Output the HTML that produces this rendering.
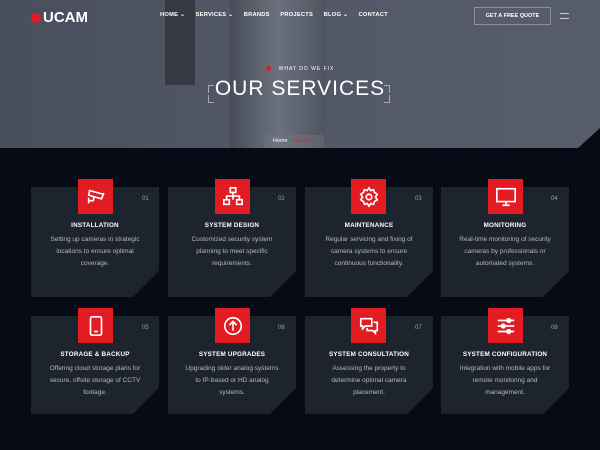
<!DOCTYPE html>
<html><head><style>
*{margin:0;padding:0;box-sizing:border-box}
body{width:600px;height:450px;overflow:hidden;background:#060b16;font-family:"Liberation Sans",sans-serif;color:#fff;position:relative}
.hero{position:absolute;left:0;top:0;width:600px;height:148px;background:linear-gradient(90deg,#484e5b 0%,#515766 40%,#575d6b 100%);clip-path:polygon(0 0,600px 0,600px 128px,578px 148px,0 148px)}
.pole{position:absolute;left:230px;top:0;width:95px;height:148px;background:linear-gradient(90deg,#3a3f48,#8a9099,#4a4f58);opacity:.45}
.blk{position:absolute;left:165px;top:0;width:30px;height:85px;background:#2a2e35;opacity:.7}
.logo{position:absolute;left:31px;top:9px;font-size:15px;font-weight:bold;display:flex;align-items:center}
.logo i{display:inline-block;width:10px;height:10px;border-radius:50%;background:#e31b23;margin-right:2px}
.nav{position:absolute;left:160px;top:12px;font-size:5.8px;font-weight:bold;letter-spacing:.2px}
.nav span{margin-right:10.5px}
.btn{position:absolute;left:474px;top:7px;width:77px;height:18px;border:1px solid #8a8f99;background:rgba(90,95,105,.6);font-size:5.5px;font-weight:bold;text-align:center;line-height:16px}
.ham{position:absolute;left:560px;top:13px;width:9px;height:6px;border-top:1.5px solid #ccc;border-bottom:1.5px solid #ccc}
.sub{position:absolute;left:0;width:600px;top:66px;text-align:center;font-size:5px;letter-spacing:1px}
.sub i{display:inline-block;width:5px;height:5px;border-radius:50%;background:#e31b23;margin-right:8px;vertical-align:middle}
.title{position:absolute;left:210px;top:76px;width:180px;height:26px;text-align:center;font-size:21px;font-weight:normal;letter-spacing:1px;line-height:26px}
.br{position:absolute;width:6px;height:8px;border:1px solid #aaa}
.crumb{position:absolute;left:264px;top:135px;width:60px;height:13px;background:rgba(120,125,135,.35);font-size:5.5px;line-height:13px;text-align:center}
.card{position:absolute;width:128px;background:#1e242e;clip-path:polygon(0 0,100% 0,100% calc(100% - 26px),calc(100% - 26px) 100%,0 100%);text-align:center}
.ic{position:absolute;width:35px;height:35px;background:#e31b23;display:flex;align-items:center;justify-content:center}
.num{position:absolute;font-size:6px;color:#9aa0aa}
.card h4{font-size:6.3px;font-weight:bold;letter-spacing:.2px;margin-top:35px}
.card p{font-size:6.5px;color:#b3b8c0;line-height:12px;margin:5px 15px 0}
</style></head><body>
<div class="hero"><div class="blk"></div><div class="pole"></div></div>
<div class="logo"><i></i>UCAM</div>
<div class="nav"><span>HOME ⌄</span><span>SERVICES ⌄</span><span>BRANDS</span><span>PROJECTS</span><span>BLOG ⌄</span><span>CONTACT</span></div>
<div class="btn">GET A FREE QUOTE</div>
<div class="ham"></div>
<div class="sub"><i></i>WHAT DO WE FIX</div>
<div class="title">OUR SERVICES</div>
<div class="br" style="left:208px;top:85px;border-right:0;border-bottom:0"></div>
<div class="br" style="left:208px;top:95px;border-right:0;border-top:0"></div>
<div class="br" style="left:384px;top:85px;border-left:0;border-bottom:0"></div>
<div class="br" style="left:384px;top:95px;border-left:0;border-top:0"></div>
<div class="crumb">Home &nbsp;<span style="color:#e31b23">› Services</span></div>

<div class="card" style="left:31px;top:187px;height:110px"><h4>INSTALLATION</h4><p>Setting up cameras in strategic locations to ensure optimal coverage.</p></div>
<div class="card" style="left:168px;top:187px;height:110px"><h4>SYSTEM DESIGN</h4><p>Customized security system planning to meet specific requirements.</p></div>
<div class="card" style="left:305px;top:187px;height:110px"><h4>MAINTENANCE</h4><p>Regular servicing and fixing of camera systems to ensure continuous functionality.</p></div>
<div class="card" style="left:441px;top:187px;height:110px"><h4>MONITORING</h4><p>Real-time monitoring of security cameras by professionals or automated systems.</p></div>
<div class="card" style="left:31px;top:316px;height:98px"><h4>STORAGE &amp; BACKUP</h4><p>Offering cloud storage plans for secure, offsite storage of CCTV footage.</p></div>
<div class="card" style="left:168px;top:316px;height:98px"><h4>SYSTEM UPGRADES</h4><p>Upgrading older analog systems to IP-based or HD analog systems.</p></div>
<div class="card" style="left:305px;top:316px;height:98px"><h4>SYSTEM CONSULTATION</h4><p>Assessing the property to determine optimal camera placement.</p></div>
<div class="card" style="left:441px;top:316px;height:98px"><h4>SYSTEM CONFIGURATION</h4><p>Integration with mobile apps for remote monitoring and management.</p></div>

<div class="num" style="left:142px;top:196px">01</div>
<div class="num" style="left:278px;top:196px">02</div>
<div class="num" style="left:415px;top:196px">03</div>
<div class="num" style="left:551px;top:196px">04</div>
<div class="num" style="left:142px;top:325px">05</div>
<div class="num" style="left:278px;top:325px">06</div>
<div class="num" style="left:415px;top:325px">07</div>
<div class="num" style="left:551px;top:325px">08</div>

<div class="ic" style="left:78px;top:179px"><svg width="22" height="22" viewBox="0 0 24 24" fill="none" stroke="#fff" stroke-width="1.8"><path d="M5 5l15 4-2 5-14-4z"/><path d="M10 12l-1 4H4M4 13v6"/><path d="M19 8l2 1"/></svg></div>
<div class="ic" style="left:215px;top:179px"><svg width="22" height="22" viewBox="0 0 24 24" fill="none" stroke="#fff" stroke-width="1.8"><rect x="9" y="2" width="6" height="5"/><rect x="2" y="15" width="6" height="5"/><rect x="16" y="15" width="6" height="5"/><path d="M12 7v4M5 15v-4h14v4M12 11v4"/></svg></div>
<div class="ic" style="left:351px;top:179px"><svg width="22" height="22" viewBox="0 0 24 24" fill="none" stroke="#fff" stroke-width="1.8"><circle cx="12" cy="12" r="3"/><path d="M12 2l2 3 3-1 1 3 3 2-2 3 2 3-3 2-1 3-3-1-2 3-2-3-3 1-1-3-3-2 2-3-2-3 3-2 1-3 3 1z"/></svg></div>
<div class="ic" style="left:488px;top:179px"><svg width="22" height="22" viewBox="0 0 24 24" fill="none" stroke="#fff" stroke-width="1.8"><rect x="2" y="3" width="20" height="14"/><path d="M8 21h8M12 17v4"/></svg></div>
<div class="ic" style="left:78px;top:308px"><svg width="22" height="22" viewBox="0 0 24 24" fill="none" stroke="#fff" stroke-width="1.8"><rect x="6" y="2" width="12" height="20" rx="2"/><path d="M10 18h4"/></svg></div>
<div class="ic" style="left:215px;top:308px"><svg width="22" height="22" viewBox="0 0 24 24" fill="none" stroke="#fff" stroke-width="1.8"><circle cx="12" cy="12" r="9"/><path d="M12 17V7M8 11l4-4 4 4"/></svg></div>
<div class="ic" style="left:351px;top:308px"><svg width="22" height="22" viewBox="0 0 24 24" fill="none" stroke="#fff" stroke-width="1.8"><path d="M3 4h12v8H8l-3 3v-3H3z"/><path d="M17 8h4v9h-2v3l-3-3h-6v-3"/></svg></div>
<div class="ic" style="left:488px;top:308px"><svg width="22" height="22" viewBox="0 0 24 24" fill="none" stroke="#fff" stroke-width="1.8"><path d="M3 6h18M3 12h18M3 18h18"/><circle cx="15" cy="6" r="2" fill="#fff"/><circle cx="9" cy="12" r="2" fill="#fff"/><circle cx="15" cy="18" r="2" fill="#fff"/></svg></div>
</body></html>
